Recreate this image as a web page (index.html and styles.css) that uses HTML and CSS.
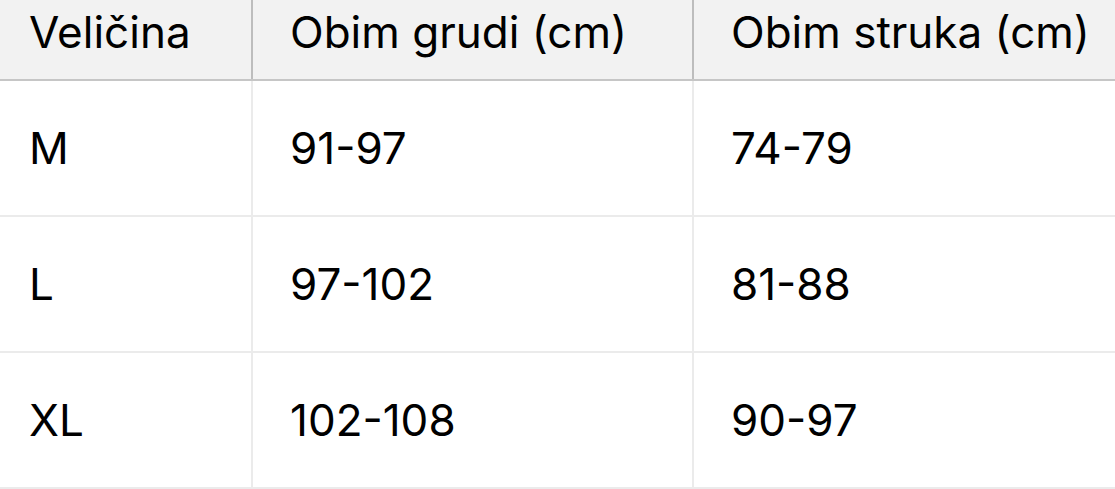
FILE: index.html
```html
<!DOCTYPE html>
<html lang="hr">
<head>
<meta charset="utf-8">
<link rel="stylesheet" href="styles.css">
</head>
<body>
<table class="size-table">
  <thead>
    <tr>
      <th class="c1">Veličina</th>
      <th class="c2">Obim grudi (cm)</th>
      <th class="c3">Obim struka (cm)</th>
    </tr>
  </thead>
  <tbody>
    <tr><td class="c1">M</td><td class="c2">91-97</td><td class="c3">74-79</td></tr>
    <tr><td class="c1">L</td><td class="c2">97-102</td><td class="c3">81-88</td></tr>
    <tr><td class="c1">XL</td><td class="c2">102-108</td><td class="c3">90-97</td></tr>
  </tbody>
</table>
</body>
</html>
```

FILE: styles.css
```css
html, body {
  margin: 0;
  padding: 0;
  background: #ffffff;
}
.size-table {
  border-collapse: collapse;
  table-layout: fixed;
  width: 1140px;
  font-family: Inter, "Noto Sans", sans-serif;
  font-size: 44px;
  color: #000;
}
.size-table th,
.size-table td {
  text-align: left;
  font-weight: 400;
  padding: 0 0 0 37px;
  white-space: nowrap;
}
.size-table th {
  background: #f2f2f2;
  height: 80px;
  line-height: 44px;
  vertical-align: top;
  padding-top: 10px;
  box-sizing: border-box;
  border-bottom: 2px solid #c6c6c6;
  border-left: 2px solid #bdbdbd;
}
.size-table td {
  height: 134px;
  vertical-align: middle;
  border-bottom: 2px solid #ebebeb;
  border-left: 2px solid #ebebeb;
}
.size-table .c1 {
  width: 252px;
  padding-left: 29px;
  border-left: none;
}
.size-table .c2 {
  width: 441px;
}
```
